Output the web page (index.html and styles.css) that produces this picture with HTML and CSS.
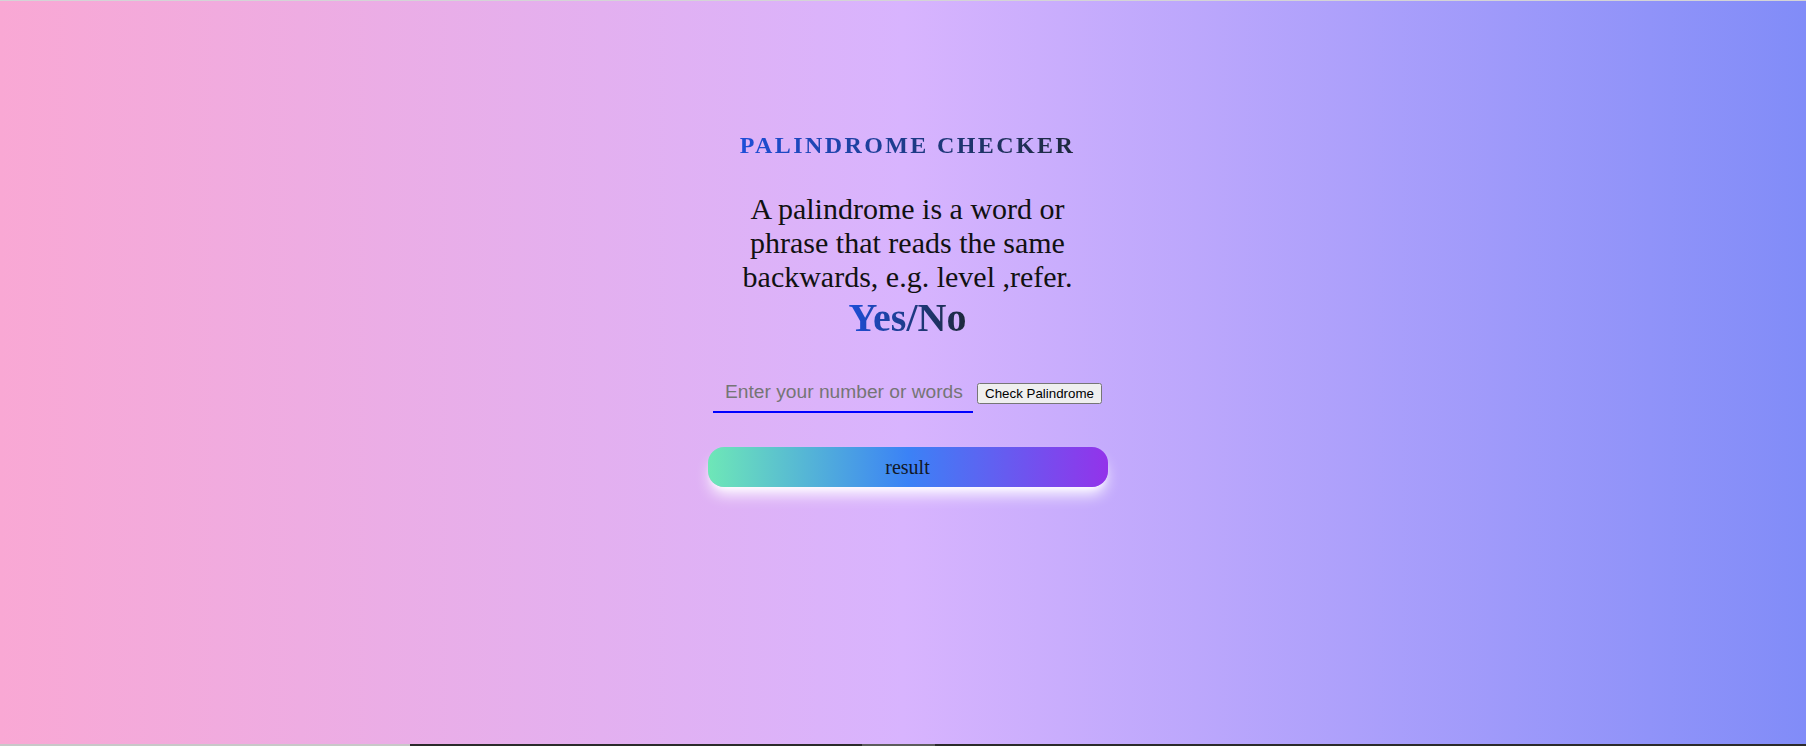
FILE: index.html
```html
<!DOCTYPE html>
<html lang="en">
<head>
<meta charset="utf-8">
<title>Palindrome Checker</title>
<link rel="stylesheet" href="styles.css">
</head>
<body>
<div class="page">
  <main class="checker">
    <h1 class="title">PALINDROME CHECKER</h1>
    <p class="intro">A palindrome is a word or phrase that reads the same backwards, e.g. level ,refer.</p>
    <h2 class="verdict">Yes/No</h2>
    <div class="form-row">
      <input class="entry" type="text" placeholder="Enter your number or words"> <button class="check-btn" type="button">Check Palindrome</button>
    </div>
    <div class="result">result</div>
  </main>
  <div class="taskbar">
    <span class="tb-light"></span>
    <span class="tb-dark"></span>
    <span class="tb-mid"></span>
    <span class="tb-dark tb-fill"></span>
  </div>
</div>
</body>
</html>
```
FILE: styles.css
```css
html, body {
  margin: 0;
  padding: 0;
}

body {
  font-family: "Liberation Serif", "Times New Roman", serif;
  overflow: hidden;
}

.page {
  height: 746px;
  box-sizing: border-box;
  border-top: 1px solid #d4d4d6;
  display: flex;
  flex-direction: column;
  background: linear-gradient(to right, #f9a8d4, #d8b4fe 50%, #818cf8);
}

.checker {
  flex: 1;
  display: flex;
  flex-direction: column;
  align-items: center;
  padding-top: 128px;
  padding-left: 9px;
}

.title {
  margin: 0;
  font-size: 24px;
  line-height: 32px;
  font-weight: 700;
  letter-spacing: 0.1em;
  background: linear-gradient(to right, #1d4ed8, #1e293b);
  -webkit-background-clip: text;
  background-clip: text;
  color: transparent;
}

.intro {
  margin: 31px 0 0;
  width: 360px;
  text-align: center;
  font-size: 30px;
  line-height: 34px;
  color: #111;
}

.verdict {
  margin: 4px 0 0;
  font-size: 40px;
  line-height: 40px;
  font-weight: 700;
  background: linear-gradient(to right, #1d4ed8, #1e293b);
  -webkit-background-clip: text;
  background-clip: text;
  color: transparent;
}

.form-row {
  margin-top: 35px;
  font-size: 16px;
}

.entry {
  width: 260px;
  box-sizing: border-box;
  padding: 8px 6px 8px 12px;
  border: none;
  border-bottom: 2px solid #0000ff;
  background: transparent;
  font-family: "Liberation Sans", Arial, sans-serif;
  font-size: 19.2px;
  outline: none;
}

.entry::placeholder {
  color: #757575;
}

.check-btn {
  font-family: "Liberation Sans", Arial, sans-serif;
  font-size: 13.333px;
}

.result {
  margin-top: 34px;
  width: 400px;
  box-sizing: border-box;
  padding: 6px 0;
  text-align: center;
  font-size: 20px;
  line-height: 28px;
  color: #111827;
  border-radius: 16px;
  background: linear-gradient(to right, #6ee7b7, #3b82f6 50%, #9333ea);
  box-shadow: 0 10px 15px -3px #ffffff, 0 4px 6px -4px #ffffff;
}

.taskbar {
  display: flex;
  height: 2px;
}

.tb-light {
  width: 410px;
  background: #c8c8c8;
}

.tb-dark {
  width: 452px;
  background: #2b2b2b;
}

.tb-mid {
  width: 73px;
  background: #5c5c5c;
}

.tb-fill {
  flex: 1;
}
```
